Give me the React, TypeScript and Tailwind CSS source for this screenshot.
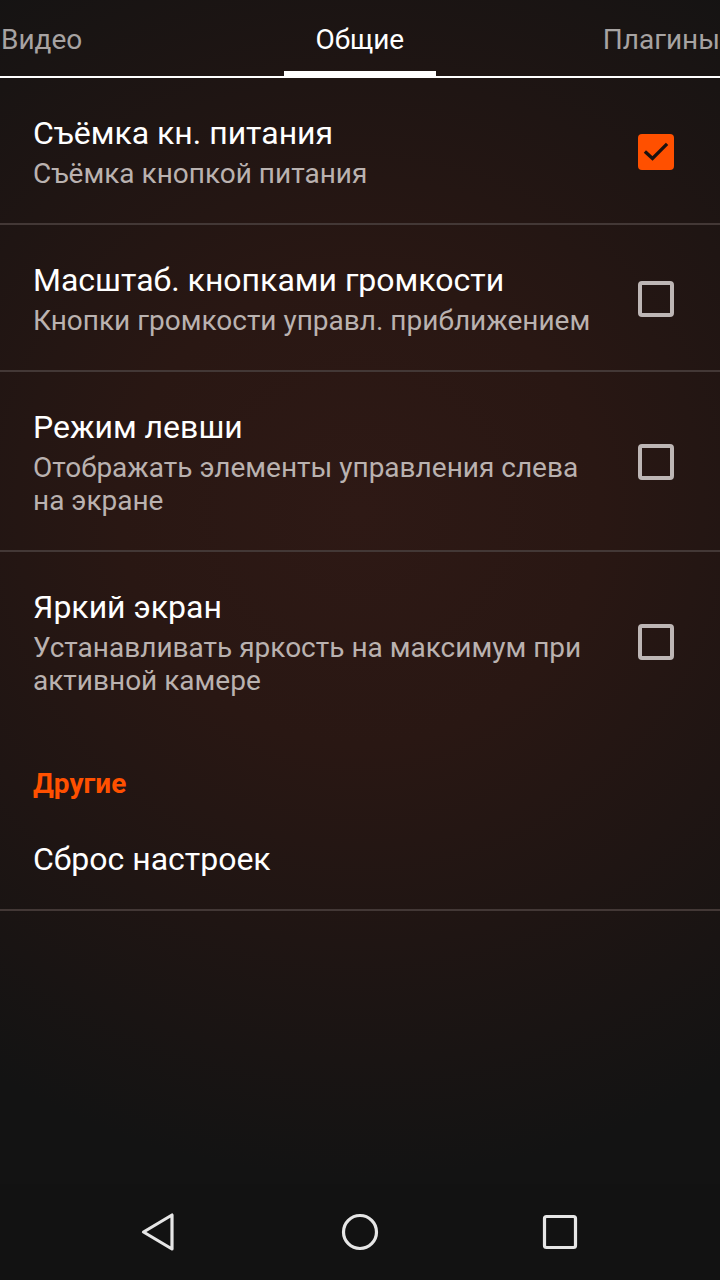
import React from "react";

const font = { fontFamily: "Roboto, 'Noto Sans', sans-serif" };

function Checkbox({ checked }: { checked?: boolean }) {
  if (checked) {
    return (
      <div className="w-[36px] h-[36px] rounded-[4px] bg-[#ff5000] flex items-center justify-center shrink-0">
        <svg width="28" height="28" viewBox="0 0 24 24">
          <path d="M3.5 12.5 L9 17.5 L20.5 6" fill="none" stroke="#1a1210" strokeWidth="2.8" strokeLinecap="square" />
        </svg>
      </div>
    );
  }
  return <div className="w-[36px] h-[36px] rounded-[4px] border-[4px] border-[#bdb6b5] shrink-0" />;
}

function Row({ title, summary, checked, divider = true }: { title: string; summary: string; checked?: boolean; divider?: boolean }) {
  return (
    <div className={`flex items-center pl-[33px] pr-[46px] pt-[35px] ${divider ? "pb-[33px] border-b-2 border-[#433836]" : "pb-[33px]"}`}>
      <div className="flex-1 pr-[40px]">
        <div className="text-[32px] leading-[40px] text-white">{title}</div>
        <div className="text-[28px] leading-[33px] text-[#bab2b0] mt-[4px]">{summary}</div>
      </div>
      <Checkbox checked={checked} />
    </div>
  );
}

export default function App() {
  return (
    <div
      className="w-[720px] h-[1280px] flex flex-col overflow-hidden"
      style={{
        ...font,
        background:
          "radial-gradient(ellipse 95% 52% at 50% 40%, #2e1915 0%, #291713 35%, #1f1513 65%, rgba(19,19,19,0) 100%), #131313",
      }}
    >
      {/* Tabs */}
      <div className="relative h-[78px] shrink-0 border-b-2 border-white">
        <div className="flex h-full items-center text-[28px] leading-[32px] pt-[4px] whitespace-nowrap">
          <div className="w-[284px] text-[#a7a3a2] pl-[1px]">Видео</div>
          <div className="w-[152px] text-center text-white">Общие</div>
          <div className="flex-1 text-[#a7a3a2] pl-[167px]">Плагины</div>
        </div>
        <div className="absolute left-[284px] bottom-0 w-[152px] h-[5px] bg-white" />
      </div>

      {/* List */}
      <div className="flex flex-col">
        <Row title="Съёмка кн. питания" summary="Съёмка кнопкой питания" checked />
        <Row title="Масштаб. кнопками громкости" summary="Кнопки громкости управл. приближением" />
        <Row title="Режим левши" summary="Отображать элементы управления слева на экране" />
        <Row title="Яркий экран" summary="Устанавливать яркость на максимум при активной камере" divider={false} />
        <div className="pl-[33px] pt-[39px] pb-[9px]">
          <div className="text-[28px] leading-[30px] font-bold text-[#ff5000]">Другие</div>
        </div>
        <div className="h-[103px] flex items-center pl-[33px] border-b-2 border-[#433836]">
          <div className="text-[32px] leading-[40px] text-white">Сброс настроек</div>
        </div>
      </div>

      <div className="flex-1" />

      {/* Nav bar */}
      <div className="h-[96px] shrink-0 bg-[#121212] flex items-center justify-center gap-[80px]">
        <div className="w-[120px] flex justify-center">
          <svg width="40" height="40" viewBox="0 0 40 40">
            <path d="M32 3 L32 37 L3.5 20 Z" fill="none" stroke="#e6e6e6" strokeWidth="3.2" strokeLinejoin="round" />
          </svg>
        </div>
        <div className="w-[120px] flex justify-center">
          <svg width="40" height="40" viewBox="0 0 40 40">
            <circle cx="20" cy="20" r="16.5" fill="none" stroke="#e6e6e6" strokeWidth="3.2" />
          </svg>
        </div>
        <div className="w-[120px] flex justify-center">
          <svg width="40" height="40" viewBox="0 0 40 40">
            <rect x="4.5" y="4.5" width="31" height="31" rx="2" fill="none" stroke="#e6e6e6" strokeWidth="3.2" />
          </svg>
        </div>
      </div>
    </div>
  );
}
